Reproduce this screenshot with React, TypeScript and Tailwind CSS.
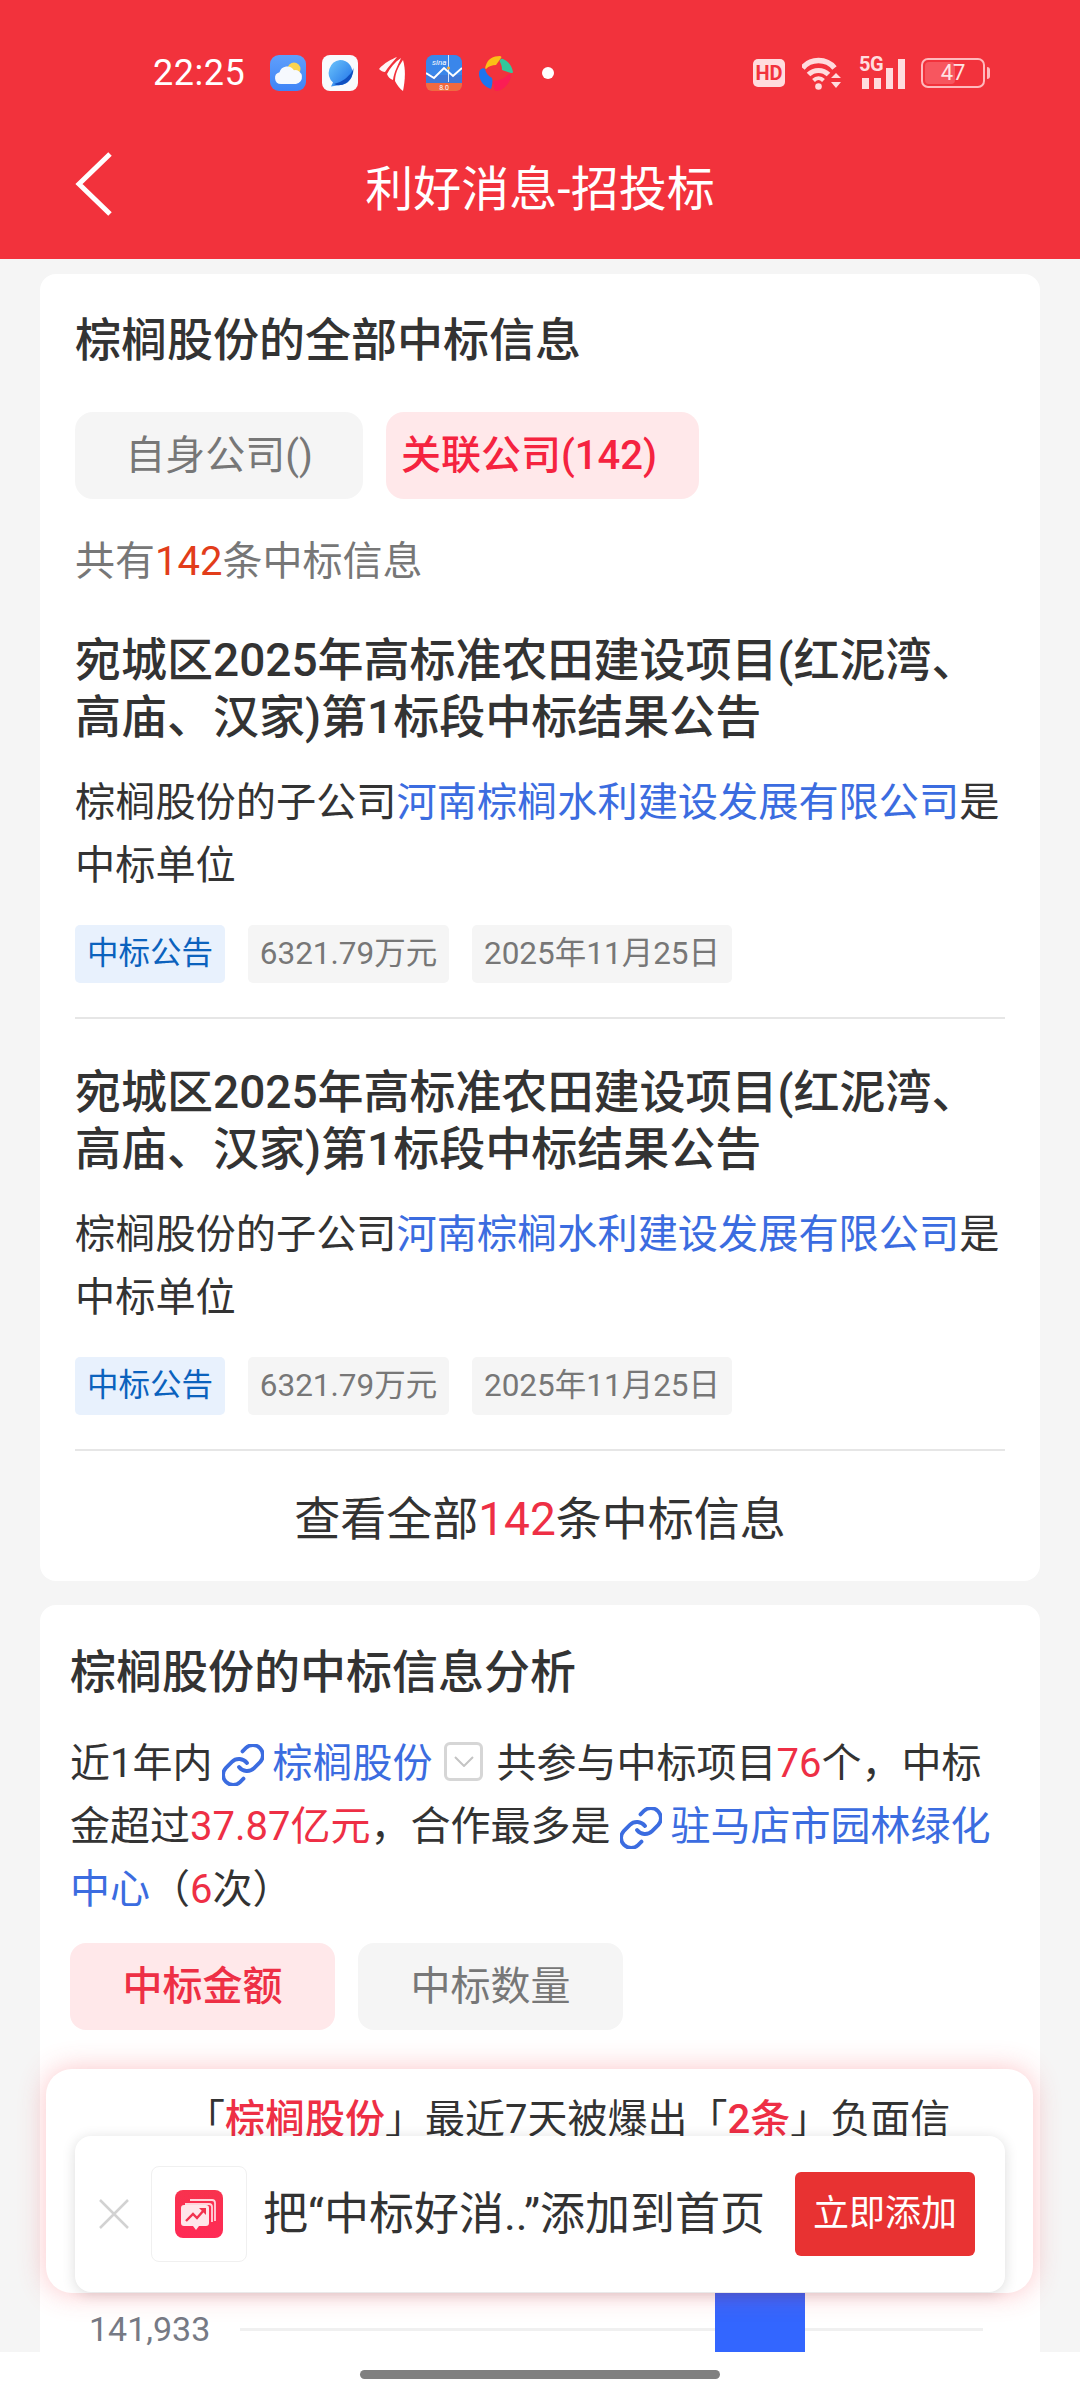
import { Link } from 'lucide-react';

const ITEMS = [1, 2];

function WeatherIcon() {
  return (
    <svg width="36" height="36" viewBox="0 0 36 36">
      <defs>
        <linearGradient id="wx" x1="0" y1="0" x2="0" y2="1">
          <stop offset="0" stopColor="#5f9ffb" />
          <stop offset="1" stopColor="#3f84f6" />
        </linearGradient>
      </defs>
      <rect width="36" height="36" rx="9" fill="url(#wx)" />
      <circle cx="24" cy="14" r="6.5" fill="#fbd44f" />
      <path d="M11 29a6 6 0 0 1-1.500-11.800 8 8 0 0 1 14.500-2 6.800 6.800 0 0 1 2 13.800z" fill="#f6f9fe" />
    </svg>
  );
}

function PlanetIcon() {
  return (
    <svg width="36" height="36" viewBox="0 0 36 36">
      <defs>
        <linearGradient id="pl" x1="0" y1="0" x2="1" y2="1">
          <stop offset="0" stopColor="#6cc4fb" />
          <stop offset="1" stopColor="#1d6fe8" />
        </linearGradient>
      </defs>
      <rect width="36" height="36" rx="8" fill="#f8fafd" />
      <path d="M18 5a12.500 12.500 0 0 1 12 16c-1.500 5-6.500 9-12 9l-9 1.500 2-4A13 13 0 0 1 18 5z" fill="url(#pl)" />
      <path d="M31 12c1 3-3 8-8 12-3 2-7 4-11 5 6 3 13 0 17-6 2-4 3-8 2-11z" fill="#0f4fc0" />
    </svg>
  );
}

function WingIcon() {
  return (
    <svg width="26" height="35" viewBox="0 0 26 35" fill="#ffffff">
      <path d="M18 1c-5 2-13 6-18 12 2 2 4 3 6 3 3-5 8-10 12-15z" opacity="0.95" />
      <path d="M22 2c-6 4-11 10-14 16 1 3 3 5 6 6 1-8 5-15 8-22z" />
      <path d="M24 4c-5 7-8 14-8 21 2 4 5 8 8 10 2-10 3-21 0-31z" />
    </svg>
  );
}

function MarketIcon() {
  return (
    <svg width="36" height="36" viewBox="0 0 36 36">
      <rect width="36" height="36" rx="8" fill="#3f78d8" />
      <path d="M0 8a8 8 0 0 1 8-8h20a8 8 0 0 1 8 8v12H0z" fill="#3a86ea" />
      <path d="M0 28v2a6 6 0 0 0 6 6h24a6 6 0 0 0 6-6v-2z" fill="#f2693f" />
      <path d="M0 18l8 5 10-10 9 8 9-8" fill="none" stroke="#ffffff" strokeWidth="2" />
      <path d="M22.500 0v27" stroke="#ffffff" strokeWidth="0.800" />
      <circle cx="22.500" cy="13" r="1.600" fill="#f7a83a" />
      <text x="6" y="10" fontSize="8" fontStyle="italic" fill="#ffffff" fontFamily="Roboto">sina</text>
      <text x="18" y="34.500" fontSize="7" textAnchor="middle" fill="#ffffff" fontFamily="Roboto">8.0</text>
    </svg>
  );
}

function PetalIcon() {
  return (
    <svg width="34" height="35" viewBox="0 0 34 35">
      <path d="M7 9c2-6 7-9 14-9 1 0 2 1 1 2l-5 7c-4 0-7 1-10 4-1 0-1-2 0-4z" fill="#fbbf16" />
      <path d="M24 3c5 2 9 7 10 13 0 1-1 1-2 1l-9-3c0-4-1-6-2-8-1-2 1-4 3-3z" fill="#34c79b" />
      <path d="M1 14c2-2 4-2 5-1 1 4 3 7 7 9 1 3 0 8-1 11-6-2-11-7-12-14 0-2 0-4 1-5z" fill="#1d74ee" />
      <path d="M14 25c6 0 12-3 16-7 2 0 2 1 2 2-1 7-7 14-14 15-2 0-3-1-3-3z" fill="#fb1d54" />
    </svg>
  );
}

function WifiIcon() {
  return (
    <svg width="40" height="34" viewBox="0 0 40 34" fill="none" stroke="#ffdcde" strokeLinecap="butt">
      <path d="M0.500 12C8.500 2 24.500 2 32.500 12" strokeWidth="5.500" />
      <path d="M6.500 18.500c5.500-5.500 14.500-5.500 20 0" strokeWidth="5" />
      <path d="M11.500 24.500c3-3 7-3 10 0" strokeWidth="4" />
      <circle cx="16.500" cy="30.500" r="3.300" fill="#ffdcde" stroke="none" />
      <path d="M29 22l5-5 5 5zM29 26l5 6 5-6z" fill="#ffdcde" stroke="none" />
    </svg>
  );
}

function SignalIcon() {
  return (
    <div className="relative h-[32px] w-[47px]">
      <span className="absolute left-[1px] top-[-3px] text-[20px] leading-[20px] font-bold tracking-[-0.5px] text-[#ffdcde]">5G</span>
      <div className="absolute inset-x-0 bottom-0 flex items-end justify-between pl-[4px]">
        <span className="h-[11px] w-[7px] bg-[#ffdcde]" />
        <span className="h-[11px] w-[7px] bg-[#ffdcde]" />
        <span className="h-[21px] w-[7px] bg-[#ffdcde]" />
        <span className="h-[30px] w-[7px] bg-[#ffdcde]" />
      </div>
    </div>
  );
}

function Battery() {
  return (
    <div className="flex items-center">
      <div className="flex h-[30px] w-[64px] items-center rounded-[7px] border-2 border-[#ffb9bd] p-[2px] relative">
        <div className="h-full w-[30px] rounded-[4px] bg-[#f7565f]" />
        <span className="absolute inset-0 flex items-center justify-center text-[22px] leading-none text-[#ffe3e4]">47</span>
      </div>
      <span className="ml-[2px] h-[12px] w-[3px] rounded-r bg-[#ffb9bd]" />
    </div>
  );
}

function StatusBar() {
  return (
    <div className="flex h-[146px] items-center pl-[153px] pr-[90px] text-white">
      <span className="w-[93px] text-[36px] leading-none tracking-[0.5px]">22:25</span>
      <div className="ml-[24px] flex items-center">
        <WeatherIcon />
        <div className="ml-[16px]">
          <PlanetIcon />
        </div>
        <div className="ml-[21px]">
          <WingIcon />
        </div>
        <div className="ml-[21px]">
          <MarketIcon />
        </div>
        <div className="ml-[17px]">
          <PetalIcon />
        </div>
        <span className="ml-[29px] h-[12px] w-[12px] rounded-full bg-white" />
      </div>
      <div className="ml-auto flex items-center">
        <span className="flex h-[28px] w-[32px] items-center justify-center rounded-[5px] bg-[#ffdcde] text-[20px] leading-none font-bold text-[#f2323c]">HD</span>
        <div className="ml-[17px]">
          <WifiIcon />
        </div>
        <div className="ml-[16px]">
          <SignalIcon />
        </div>
        <div className="ml-[16px]">
          <Battery />
        </div>
      </div>
    </div>
  );
}

function BidItem() {
  return (
    <div className="border-b-2 border-[#e6e6e6] pb-[34px] pt-[45px]">
      <h4 className="text-[46px] leading-[57px] font-medium text-[#333333]">
        宛城区2025年高标准农田建设项目(红泥湾、高庙、汉家)第1标段中标结果公告
      </h4>
      <p className="mt-[25px] text-[40.2px] leading-[63px] text-[#333333]">
        棕榈股份的子公司<span className="text-[#3b6ce0]">河南棕榈水利建设发展有限公司</span>是中标单位
      </p>
      <div className="mt-[28px] flex gap-[23px] text-[31.5px] leading-[58px]">
        <span className="flex h-[58px] w-[150px] items-center justify-center rounded-[5px] bg-[#e8f1fd] text-[#0b62bd]">中标公告</span>
        <span className="flex h-[58px] w-[201px] items-center justify-center rounded-[5px] bg-[#f5f5f5] text-[#777777]">6321.79万元</span>
        <span className="flex h-[58px] w-[260px] items-center justify-center rounded-[5px] bg-[#f5f5f5] text-[#777777]">2025年11月25日</span>
      </div>
    </div>
  );
}

function AllBidsCard() {
  return (
    <section className="mx-[40px] mt-[15px] rounded-[16px] bg-white px-[35px] pt-[34px]">
      <h3 className="text-[46px] leading-[64px] font-medium text-[#333333]">棕榈股份的全部中标信息</h3>
      <div className="mt-[40px] flex gap-[23px]">
        <button className="h-[87px] w-[288px] rounded-[18px] bg-[#f5f5f5] text-[40px] text-[#777777]">自身公司()</button>
        <button className="h-[87px] w-[313px] rounded-[18px] bg-[#ffe8ea] pl-[15px] text-left text-[40px] font-medium text-[#f5233f]">关联公司(142)</button>
      </div>
      <p className="mt-[38px] text-[40px] leading-[50px] text-[#777777]">
        共有<span className="text-[#e23d1a]">142</span>条中标信息
      </p>
      {ITEMS.map((i) => (
        <BidItem key={i} />
      ))}
      <div className="flex h-[130px] items-center justify-center pt-[6px] text-[46px] text-[#333333]">
        查看全部<span className="text-[#ee2f45]">142</span>条中标信息
      </div>
    </section>
  );
}

function ChainIcon({ className }: { className: string }) {
  return <Link className={`inline h-[42px] w-[42px] align-[-9px] text-[#3b6ce0] ${className}`} viewBox="1.5 1.5 21 21" strokeWidth={1.9} />;
}

function Checkbox() {
  return (
    <span className="ml-[12px] mr-[13px] inline-flex h-[39px] w-[39px] items-center justify-center rounded-[6px] border-[3px] border-[#d6d6d6] align-[10px]">
      <svg className="block" width="20" height="12" viewBox="0 0 20 12" fill="none" stroke="#c4c4c4" strokeWidth="2">
        <path d="M1 2l9 9 9-9" />
      </svg>
    </span>
  );
}

function AnalysisCard() {
  return (
    <section className="mx-[40px] mt-[24px] rounded-[16px] bg-white px-[30px] pb-[100px] pt-[35px]">
      <h3 className="text-[46px] leading-[64px] font-medium text-[#333333]">棕榈股份的中标信息分析</h3>
      <p className="mt-[28px] text-[40px] leading-[63px] text-[#333333]">
        近1年内
        <ChainIcon className="ml-[10px] mr-[8px]" />
        <span className="text-[#3b6ce0]">棕榈股份</span>
        <Checkbox />
        共参与中标项目<span className="text-[#ee2f45]">76</span>个，中标金超过
        <span className="text-[#ee2f45]">37.87亿元</span>，合作最多是
        <ChainIcon className="ml-[10px] mr-[8px]" />
        <span className="text-[#3b6ce0]">驻马店市园林绿化中心</span>（<span className="text-[#ee2f45]">6</span>次）
      </p>
      <div className="mt-[22px] flex gap-[23px]">
        <button className="h-[87px] w-[265px] rounded-[16px] bg-[#ffe8ea] text-[40px] font-medium text-[#ee2f45]">中标金额</button>
        <button className="h-[87px] w-[265px] rounded-[16px] bg-[#f5f5f5] text-[40px] text-[#777777]">中标数量</button>
      </div>
      <div className="mt-[279px] flex items-center pl-[19px] pr-[27px]">
        <span className="w-[151px] text-[34px] leading-[40px] text-[#767a85]">141,933</span>
        <div className="relative h-[3px] flex-1 bg-[#f0f0f0]">
          <div className="absolute bottom-[-60px] left-[475px] h-[200px] w-[90px] bg-[#3366ff]" />
        </div>
      </div>
    </section>
  );
}

function AppGlyph() {
  return (
    <svg width="48" height="48" viewBox="0 0 48 48">
      <defs>
        <linearGradient id="ap" x1="0" y1="0" x2="0" y2="1">
          <stop offset="0" stopColor="#f8324e" />
          <stop offset="1" stopColor="#ff2a55" />
        </linearGradient>
      </defs>
      <rect width="48" height="48" rx="8" fill="url(#ap)" />
      <path d="M15 10h22a3 3 0 0 1 3 3v18" fill="none" stroke="#ffd5dc" strokeWidth="1.800" />
      <path d="M10 14h24a3 3 0 0 1 3 3v15" fill="none" stroke="#ffd5dc" strokeWidth="1.800" />
      <path d="M9 15h22a3 3 0 0 1 3 3v15a3 3 0 0 1-3 3h-7l-3 4-3-4H9a3 3 0 0 1-3-3V18a3 3 0 0 1 3-3z" fill="#ffe6ea" />
      <path d="M11 31l7-7 4 4 7-8" fill="none" stroke="#f2324e" strokeWidth="2.400" />
      <path d="M24 18h7v7z" fill="#f2324e" />
    </svg>
  );
}

function AddToHomePopup() {
  return (
    <div className="absolute left-[46px] top-[2069px] h-[224px] w-[987px] rounded-[26px] bg-white shadow-[0_0_28px_rgba(245,60,70,0.3)]">
      <p className="pl-[139px] pt-[26px] text-[40px] leading-[50px] text-[#333333]">
        「<span className="font-medium text-[#ee2f45]">棕榈股份</span>」最近7天被爆出「<span className="font-medium text-[#ee2f45]">2条</span>」负面信
      </p>
      <div className="absolute left-[29px] top-[67px] flex h-[156px] w-[930px] items-center rounded-[16px] bg-white pl-[23px] shadow-[0_2px_14px_rgba(0,0,0,0.14)]">
        <svg width="32" height="32" viewBox="0 0 32 32" stroke="#d2d2d2" strokeWidth="2.500" fill="none">
          <path d="M2 2l28 28M30 2L2 30" />
        </svg>
        <div className="ml-[21px] flex h-[96px] w-[96px] items-center justify-center rounded-[8px] border border-[#f0f0f0]">
          <AppGlyph />
        </div>
        <span className="ml-[16px] text-[45px] leading-none whitespace-nowrap text-[#333333]">把“中标好消..”添加到首页</span>
        <button className="ml-[30px] h-[84px] w-[180px] rounded-[6px] bg-[#e83232] text-[36px] text-white">立即添加</button>
      </div>
    </div>
  );
}

export default function App() {
  return (
    <div className="relative flex h-[2400px] w-[1080px] flex-col overflow-hidden bg-[#f5f5f5] font-['Roboto','Noto_Sans_CJK_SC',sans-serif]">
      <header className="h-[259px] shrink-0 bg-[#f2323c]">
        <StatusBar />
        <div className="grid h-[88px] grid-cols-[1fr_auto_1fr] items-center text-white">
          <svg className="mb-[10px] ml-[74px]" width="40" height="66" viewBox="0 0 40 66" fill="none" stroke="#ffffff" strokeWidth="5">
            <path d="M36 2L5 32l31 30" />
          </svg>
          <h1 className="text-[48px] leading-none">利好消息-招投标</h1>
        </div>
      </header>
      <main className="min-h-0 flex-1 overflow-hidden">
        <AllBidsCard />
        <AnalysisCard />
      </main>
      <div className="flex h-[48px] shrink-0 items-start justify-center bg-white pt-[18px]">
        <span className="h-[9px] w-[360px] rounded-full bg-[#808080]" />
      </div>
      <AddToHomePopup />
    </div>
  );
}
